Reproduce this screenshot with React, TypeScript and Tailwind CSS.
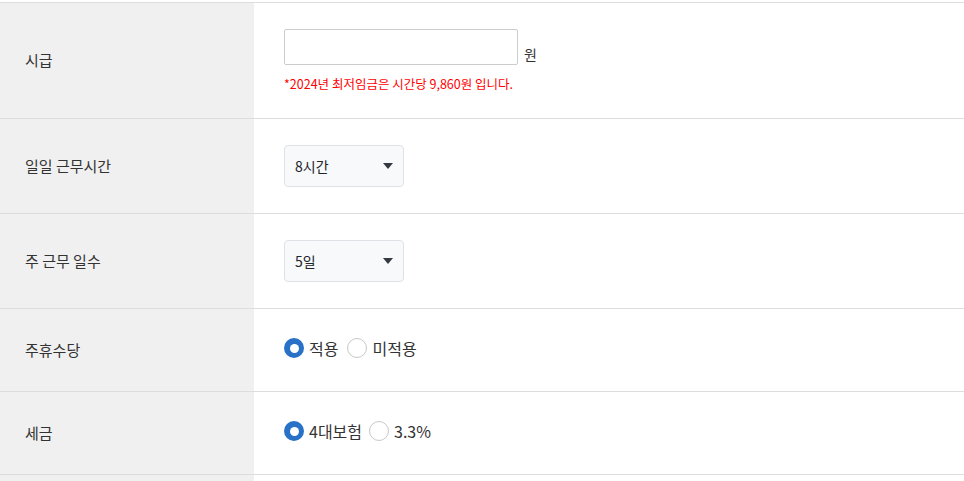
import { useState } from "react";

const font = { fontFamily: '"Noto Sans CJK KR", "Noto Sans", sans-serif' };

function Row({ label, h, children }: { label: string; h: string; children: React.ReactNode }) {
  return (
    <div className={`flex border-b border-[#dddddd] ${h}`}>
      <div className="w-[254px] shrink-0 bg-[#f0f0f0] flex items-center pl-[25px] text-[15px] text-[#333333]">
        {label}
      </div>
      <div className="flex-1 flex flex-col justify-center pl-[30px]">{children}</div>
    </div>
  );
}

function Select({ value }: { value: string }) {
  return (
    <div className="w-[120px] h-[42px] rounded-[4px] border border-[#dee2e6] bg-[#f8f9fa] flex items-center justify-between pl-[10px] pr-[10px] text-[14px] text-[#212529]">
      <span>{value}</span>
      <svg width="10" height="6" viewBox="0 0 10 6">
        <path d="M0 0h10L5 6z" fill="#343a40" />
      </svg>
    </div>
  );
}

function Radio({ label, checked, onClick }: { label: string; checked: boolean; onClick: () => void }) {
  return (
    <button type="button" onClick={onClick} className="flex items-center gap-[5px] text-[16px] text-[#333333]">
      {checked ? (
        <span className="w-[20px] h-[20px] rounded-full bg-[#2871c6] flex items-center justify-center">
          <span className="w-[9px] h-[9px] rounded-full bg-white" />
        </span>
      ) : (
        <span className="w-[20px] h-[20px] rounded-full border border-[#c8c8c8] bg-white" />
      )}
      <span>{label}</span>
    </button>
  );
}

export default function App() {
  const [holiday, setHoliday] = useState(0);
  const [tax, setTax] = useState(0);

  return (
    <div className="min-h-screen bg-white pt-[2px]" style={font}>
      <div className="border-t border-[#dddddd]">
        <Row label="시급" h="h-[116px]">
          <div className="pb-[2px]">
            <div className="flex items-end gap-[6px]">
              <input className="w-[234px] h-[36px] border border-[#cccccc] rounded-[2px] outline-none px-2" />
              <span className="text-[14px] text-[#333333] leading-none pb-[4px]">원</span>
            </div>
            <p className="mt-[13px] text-[12.5px] text-[#ff0000] leading-none">
              *2024년 최저임금은 시간당 9,860원 입니다.
            </p>
          </div>
        </Row>
        <Row label="일일 근무시간" h="h-[95px]">
          <Select value="8시간" />
        </Row>
        <Row label="주 근무 일수" h="h-[95px]">
          <Select value="5일" />
        </Row>
        <Row label="주휴수당" h="h-[83px]">
          <div className="flex items-center gap-[9px] -mt-[4px]">
            <Radio label="적용" checked={holiday === 0} onClick={() => setHoliday(0)} />
            <Radio label="미적용" checked={holiday === 1} onClick={() => setHoliday(1)} />
          </div>
        </Row>
        <Row label="세금" h="h-[83px]">
          <div className="flex items-center gap-[7px] -mt-[4px]">
            <Radio label="4대보험" checked={tax === 0} onClick={() => setTax(0)} />
            <Radio label="3.3%" checked={tax === 1} onClick={() => setTax(1)} />
          </div>
        </Row>
        <Row label="" h="h-[83px]">
          <div />
        </Row>
      </div>
    </div>
  );
}
